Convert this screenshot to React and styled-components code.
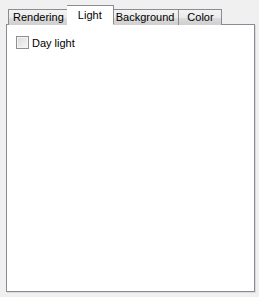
import React from "react";
import styled, { createGlobalStyle } from "styled-components";

const tabs = ["Rendering", "Light", "Background", "Color"];

const GlobalStyle = createGlobalStyle`
  html, body {
    margin: 0;
    padding: 0;
    background: #f0f0f0;
  }
  body {
    font-family: "Liberation Sans", Arial, sans-serif;
    font-size: 11px;
    color: #000;
  }
`;

const App = () => {
  const [active, setActive] = React.useState(1);
  const [dayLight, setDayLight] = React.useState(false);

  return (
    <>
      <GlobalStyle />
      <Wrapper>
        <TabStrip>
          {tabs.map((name, index) => (
            <Tab
              key={name}
              $active={index === active}
              onClick={() => setActive(index)}
            >
              {name}
            </Tab>
          ))}
        </TabStrip>
        <Panel>
          <CheckRow onClick={() => setDayLight(!dayLight)}>
            <Box $checked={dayLight}>{dayLight ? "✓" : ""}</Box>
            Day light
          </CheckRow>
        </Panel>
      </Wrapper>
    </>
  );
};

const Wrapper = styled.div`
  width: 259px;
  height: 297px;
  box-sizing: border-box;
  padding: 5px 4px 5px 6px;
  display: flex;
  flex-direction: column;
`;

const TabStrip = styled.div`
  display: flex;
  align-items: flex-end;
  height: 20px;
  padding-left: 2px;
  margin-bottom: -1px;
  position: relative;
  z-index: 1;
`;

const Tab = styled.div`
  box-sizing: border-box;
  min-width: 43px;
  padding: 0 4px;
  text-align: center;
  cursor: default;
  border: 1px solid #898c95;
  white-space: nowrap;
  ${({ $active }) =>
    $active
      ? `
    height: 20px;
    min-width: 47px;
    margin: 0 -2px;
    padding: 3px 7px 0;
    background: #fff;
    border-bottom: 1px solid #fff;
    position: relative;
    z-index: 2;
  `
      : `
    height: 16px;
    line-height: 15px;
    background: linear-gradient(#f3f3f3, #ebebeb 50%, #dddddd 51%, #cfcfcf);
    border-bottom: none;
    & + & { border-left: none; }
  `}
`;

const Panel = styled.div`
  flex: 1;
  background: #fff;
  border: 1px solid #898c95;
  box-shadow: 1px 1px 0 #dadada;
  padding: 11px 9px;
`;

const CheckRow = styled.label`
  display: flex;
  align-items: center;
  gap: 3px;
  cursor: default;
`;

const Box = styled.span`
  width: 13px;
  height: 13px;
  box-sizing: border-box;
  border: 1px solid #8e8f8f;
  background: linear-gradient(135deg, #dcdcdc, #f6f6f6);
  box-shadow: inset 0 0 0 1px #f4f4f4;
  font-size: 10px;
  line-height: 11px;
  text-align: center;
`;

export default App;
